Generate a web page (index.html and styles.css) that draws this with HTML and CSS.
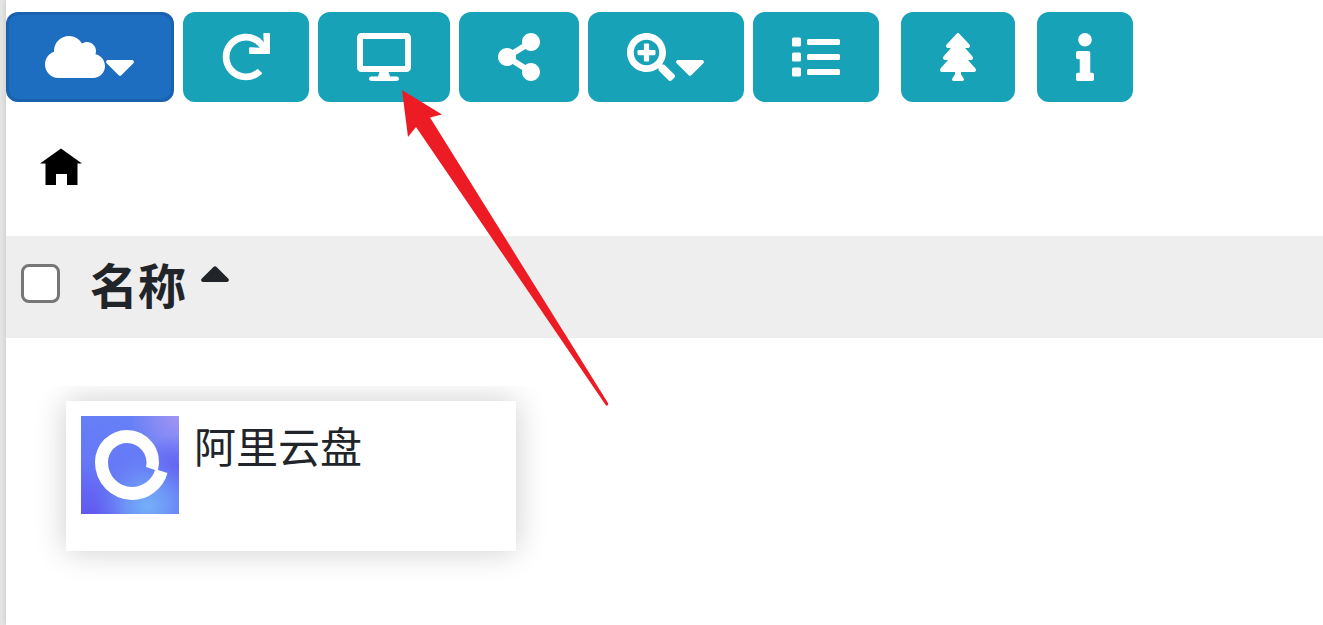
FILE: index.html
```html
<!DOCTYPE html>
<html lang="zh-CN">
<head>
  <meta charset="utf-8">
  <title>文件</title>
  <link rel="stylesheet" href="styles.css">
</head>
<body>
  <main class="content">
    <div class="toolbar">
      <button class="btn btn-primary" aria-label="云盘">
        <svg class="icon" viewBox="0 0 640 512"><path d="M537.6 226.6c4.1-10.7 6.4-22.4 6.4-34.6 0-53-43-96-96-96-19.7 0-38.1 6-53.3 16.2C367 64.2 315.3 32 256 32c-88.4 0-160 71.6-160 160 0 2.7.1 5.4.2 8.1C40.2 219.8 0 273.2 0 336c0 79.5 64.5 144 144 144h368c70.7 0 128-57.3 128-128 0-61.9-44-113.6-102.4-125.4z"/></svg>
        <svg class="icon" viewBox="0 -96 320 512"><path d="M31.3 192h257.3c17.8 0 26.7 21.5 14.1 34.1L174.1 354.7c-7.8 7.8-20.5 7.8-28.3 0L17.2 226.1C4.6 213.5 13.5 192 31.3 192z"/></svg>
      </button>
      <button class="btn" aria-label="刷新">
        <svg class="icon" viewBox="0 0 512 512"><path d="M500.33 0h-47.41a12 12 0 0 0-12 12.57l4 82.76A247.42 247.42 0 0 0 256 8C119.34 8 7.9 119.53 8 256.19 8.1 393.07 119.1 504 256 504a247.1 247.1 0 0 0 166.18-63.91 12 12 0 0 0 .48-17.43l-34-34a12 12 0 0 0-16.38-.55A176 176 0 1 1 402.1 157.8l-101.53-4.87a12 12 0 0 0-12.57 12v47.41a12 12 0 0 0 12 12h200.33a12 12 0 0 0 12-12V12a12 12 0 0 0-12-12z"/></svg>
      </button>
      <button class="btn" aria-label="桌面">
        <svg class="icon" viewBox="0 0 576 512"><path d="M528 0H48C21.5 0 0 21.5 0 48v320c0 26.5 21.5 48 48 48h192l-16 48h-72c-13.3 0-24 10.7-24 24s10.7 24 24 24h272c13.3 0 24-10.7 24-24s-10.7-24-24-24h-72l-16-48h192c26.5 0 48-21.5 48-48V48c0-26.5-21.5-48-48-48zm-16 352H64V64h448v288z"/></svg>
      </button>
      <button class="btn" aria-label="分享">
        <svg class="icon" viewBox="0 0 448 512"><path d="M352 320c-22.608 0-43.387 7.819-59.79 20.895l-102.486-64.054a96.551 96.551 0 0 0 0-41.683l102.486-64.054C308.613 184.181 329.392 192 352 192c53.019 0 96-42.981 96-96S405.019 0 352 0s-96 42.981-96 96c0 7.158.79 14.13 2.276 20.841L155.79 180.895C139.387 167.819 118.608 160 96 160c-53.019 0-96 42.981-96 96s42.981 96 96 96c22.608 0 43.387-7.819 59.79-20.895l102.486 64.054A96.301 96.301 0 0 0 256 416c0 53.019 42.981 96 96 96s96-42.981 96-96-42.981-96-96-96z"/></svg>
      </button>
      <button class="btn" aria-label="缩放">
        <svg class="icon" viewBox="0 0 512 512"><path d="M304 192v32c0 6.6-5.4 12-12 12h-56v56c0 6.6-5.4 12-12 12h-32c-6.6 0-12-5.4-12-12v-56h-56c-6.6 0-12-5.4-12-12v-32c0-6.6 5.4-12 12-12h56v-56c0-6.6 5.4-12 12-12h32c6.6 0 12 5.4 12 12v56h56c6.6 0 12 5.4 12 12zm201 284.7L476.7 505c-9.4 9.4-24.6 9.4-33.9 0L343 405.3c-4.5-4.5-7-10.6-7-17V372c-35.3 27.6-79.7 44-128 44C93.1 416 0 322.9 0 208S93.1 0 208 0s208 93.1 208 208c0 48.3-16.4 92.7-44 128h16.3c6.4 0 12.5 2.5 17 7l99.7 99.7c9.3 9.4 9.3 24.6 0 34zM344 208c0-75.2-60.8-136-136-136S72 132.8 72 208s60.8 136 136 136 136-60.8 136-136z"/></svg>
        <svg class="icon" viewBox="0 -96 320 512"><path d="M31.3 192h257.3c17.8 0 26.7 21.5 14.1 34.1L174.1 354.7c-7.8 7.8-20.5 7.8-28.3 0L17.2 226.1C4.6 213.5 13.5 192 31.3 192z"/></svg>
      </button>
      <button class="btn" aria-label="列表">
        <svg class="icon" viewBox="0 0 512 512"><path d="M80 368H16a16 16 0 0 0-16 16v64a16 16 0 0 0 16 16h64a16 16 0 0 0 16-16v-64a16 16 0 0 0-16-16zm0-320H16A16 16 0 0 0 0 64v64a16 16 0 0 0 16 16h64a16 16 0 0 0 16-16V64a16 16 0 0 0-16-16zm0 160H16a16 16 0 0 0-16 16v64a16 16 0 0 0 16 16h64a16 16 0 0 0 16-16v-64a16 16 0 0 0-16-16zm416 176H176a16 16 0 0 0-16 16v32a16 16 0 0 0 16 16h320a16 16 0 0 0 16-16v-32a16 16 0 0 0-16-16zm0-320H176a16 16 0 0 0-16 16v32a16 16 0 0 0 16 16h320a16 16 0 0 0 16-16V80a16 16 0 0 0-16-16zm0 160H176a16 16 0 0 0-16 16v32a16 16 0 0 0 16 16h320a16 16 0 0 0 16-16v-32a16 16 0 0 0-16-16z"/></svg>
      </button>
      <button class="btn btn-apart" aria-label="目录树">
        <svg class="icon" viewBox="0 0 384 512"><path d="M378.31 378.49L298.42 288h30.63c9.01 0 16.98-5 20.78-13.06 3.8-8.04 2.55-17.26-3.28-24.05L268.42 160h28.89c9.1 0 17.3-5.35 20.86-13.61 3.52-8.13 1.86-17.59-4.24-24.08L203.66 4.83c-6.03-6.45-17.28-6.45-23.32 0L70.06 122.31c-6.1 6.49-7.75 15.95-4.24 24.08C69.38 154.65 77.59 160 86.69 160h28.89l-78.14 90.91c-5.81 6.78-7.06 15.99-3.27 24.04C37.97 283 45.93 288 54.95 288h30.63L5.69 378.49c-6 6.79-7.36 16.09-3.56 24.26 3.75 8.05 12 13.25 21.01 13.25H160v24.45l-30.29 48.4c-5.32 10.64 2.42 23.16 14.31 23.16h95.96c11.89 0 19.63-12.52 14.31-23.16L224 440.45V416h136.86c9.01 0 17.26-5.2 21.01-13.25 3.8-8.17 2.44-17.47-3.56-24.26z"/></svg>
      </button>
      <button class="btn btn-apart" aria-label="信息">
        <svg class="icon" viewBox="0 0 192 512"><path d="M20 424.229h20V279.771H20c-11.046 0-20-8.954-20-20V212c0-11.046 8.954-20 20-20h112c11.046 0 20 8.954 20 20v212.229h20c11.046 0 20 8.954 20 20V492c0 11.046-8.954 20-20 20H20c-11.046 0-20-8.954-20-20v-47.771c0-11.046 8.954-20 20-20zM96 0C56.235 0 24 32.235 24 72s32.235 72 72 72 72-32.235 72-72S135.764 0 96 0z"/></svg>
      </button>
    </div>

    <nav class="breadcrumb">
      <a href="#" aria-label="主页">
        <svg class="home" viewBox="0 0 42 38"><path d="M21 .5L42 15.5h-4.500V37H27V26H16v11H5.500V15.500H0z"/></svg>
      </a>
    </nav>

    <div class="list-header">
      <input type="checkbox" class="check" id="selectAll" aria-label="全选">
      <button class="sort">名称
        <svg class="icon" viewBox="0 0 320 512"><path d="M288.662 352H31.338c-17.818 0-26.741-21.543-14.142-34.142l128.662-128.662c7.81-7.81 20.474-7.81 28.284 0l128.662 128.662c12.6 12.599 3.676 34.142-14.142 34.142z"/></svg>
      </button>
    </div>

    <div class="files">
      <a href="#" class="file">
        <svg class="thumb" viewBox="0 0 98 98">
          <defs>
            <linearGradient id="base" x1=".3" y1="0" x2="0" y2="1">
              <stop offset="0" stop-color="#6680f7"/>
              <stop offset=".5" stop-color="#6678f6"/>
              <stop offset="1" stop-color="#6257f0"/>
            </linearGradient>
            <radialGradient id="pink" cx="1" cy="0" r=".5">
              <stop offset="0" stop-color="#a395f3"/>
              <stop offset="1" stop-color="#a395f3" stop-opacity="0"/>
            </radialGradient>
            <radialGradient id="violet" cx=".95" cy=".55" r=".35">
              <stop offset="0" stop-color="#6460f2"/>
              <stop offset="1" stop-color="#6460f2" stop-opacity="0"/>
            </radialGradient>
            <radialGradient id="sky" cx=".68" cy=".92" r=".55">
              <stop offset="0" stop-color="#74b0f8"/>
              <stop offset=".4" stop-color="#70a2f7" stop-opacity=".8"/>
              <stop offset="1" stop-color="#6a86f7" stop-opacity="0"/>
            </radialGradient>
          </defs>
          <rect width="98" height="98" fill="url(#base)"/>
          <rect width="98" height="98" fill="url(#pink)"/>
          <rect width="98" height="98" fill="url(#violet)"/>
          <rect width="98" height="98" fill="url(#sky)"/>
          <path fill="#fff" fill-rule="evenodd" d="M77 54A32 32 0 0 0 46 14A32 32 0 0 0 14 46A37.500 37.500 0 0 0 51 84A37 37 0 0 0 86.500 57zM65 51L74 54A24 24 0 0 1 51 71A24.500 24.500 0 0 1 27 46A19 19 0 0 1 46 27A19.500 19.500 0 0 1 65 51z"/>
        </svg>
        <span class="file-name">阿里云盘</span>
      </a>
    </div>
  </main>

  <svg class="pointer" viewBox="0 0 208 317"><path d="M0 0L40 24.500L28 27.500L206 313Q207 316 204 315.500L14 37L6 47z"/></svg>
</body>
</html>
```

FILE: styles.css
```css
* {
  box-sizing: border-box;
}

body {
  margin: 0;
  padding-left: 6px;
  background: #e5e5e5;
  color: #212529;
  font-family: "Noto Sans CJK SC", sans-serif;
}

.content {
  min-height: 100vh;
  padding-top: 12px;
  background: #fff;
  box-shadow: 0 0 6px rgba(0, 0, 0, 0.15);
}

button {
  font-family: inherit;
  color: inherit;
  cursor: pointer;
}

.icon {
  display: block;
  height: 48px;
  fill: currentColor;
}

.toolbar {
  display: flex;
  gap: 9px;
}

.btn {
  display: flex;
  align-items: center;
  height: 90px;
  padding: 0 36px;
  border: 3px solid #17a2b8;
  border-radius: 12px;
  background: #17a2b8;
  color: #fff;
}

.btn-primary {
  border-color: #1a61b0;
  background: #1d6dc1;
}

.btn-apart {
  margin-left: 13px;
}

.breadcrumb {
  padding: 46px 34px 50px;
}

.home {
  display: block;
  width: 42px;
  height: 38px;
  fill: #000;
}

.list-header {
  display: flex;
  align-items: center;
  gap: 30px;
  height: 102px;
  padding: 0 15px 8px;
  background: #eee;
}

.check {
  appearance: none;
  width: 39px;
  height: 39px;
  margin: 0;
  border: 3px solid #767676;
  border-radius: 8px;
  background: #fff;
}

.sort {
  display: flex;
  align-items: center;
  gap: 14px;
  padding: 0;
  border: 0;
  background: none;
  font-size: 48px;
  font-weight: bold;
  line-height: 72px;
}

.sort .icon {
  margin-bottom: 20px;
}

.files {
  margin-top: 48px;
  padding: 15px 60px 60px;
  overflow: hidden;
}

.file {
  display: flex;
  gap: 15px;
  width: 450px;
  height: 150px;
  padding: 15px;
  background: #fff;
  box-shadow: 0 0 30px rgba(0, 0, 0, 0.2);
  color: inherit;
  text-decoration: none;
}

.thumb {
  width: 98px;
  height: 98px;
}

.file-name {
  font-size: 42px;
  line-height: 57px;
}

/* red arrow lying over the page */
.pointer {
  position: absolute;
  top: 90px;
  left: 402px;
  width: 208px;
  height: 317px;
  fill: #ed1c24;
  pointer-events: none;
}
```
